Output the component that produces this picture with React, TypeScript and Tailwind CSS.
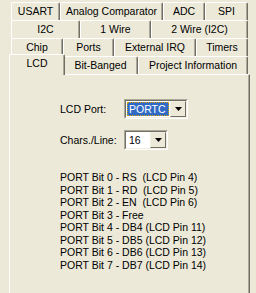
import type { ReactNode } from "react";

const ROWS: { label: string; w: number }[][] = [
  [
    { label: "USART", w: 49 },
    { label: "Analog Comparator", w: 103 },
    { label: "ADC", w: 42 },
    { label: "SPI", w: 43 },
  ],
  [
    { label: "I2C", w: 69 },
    { label: "1 Wire", w: 71 },
    { label: "2 Wire (I2C)", w: 97 },
  ],
  [
    { label: "Chip", w: 52 },
    { label: "Ports", w: 51 },
    { label: "External IRQ", w: 82 },
    { label: "Timers", w: 52 },
  ],
];

const PINS = [
  "PORT Bit 0 - RS  (LCD Pin 4)",
  "PORT Bit 1 - RD  (LCD Pin 5)",
  "PORT Bit 2 - EN  (LCD Pin 6)",
  "PORT Bit 3 - Free",
  "PORT Bit 4 - DB4 (LCD Pin 11)",
  "PORT Bit 5 - DB5 (LCD Pin 12)",
  "PORT Bit 6 - DB6 (LCD Pin 13)",
  "PORT Bit 7 - DB7 (LCD Pin 14)",
];

function Tab({ label, w }: { label: string; w: number }) {
  return (
    <div
      style={{ width: w }}
      className="h-[18px] shrink-0 flex items-center justify-center border-l border-t border-white border-r border-r-[#716f64] shadow-[inset_-1px_0_0_#aca899] rounded-t-[2px]"
    >
      {label}
    </div>
  );
}

function Combo({ width, children }: { width: number; children: ReactNode }) {
  return (
    <div
      style={{ width }}
      className="h-[20px] border border-t-[#aca899] border-l-[#aca899] border-b-white border-r-white"
    >
      <div className="h-full flex bg-white border border-t-[#716f64] border-l-[#716f64] border-b-[#f1efe2] border-r-[#f1efe2]">
        <div className="flex-1 flex p-px">{children}</div>
        <div className="w-[16px] h-full flex items-center justify-center bg-[#ece9d8] border border-t-[#f1efe2] border-l-[#f1efe2] border-b-[#716f64] border-r-[#716f64]">
          <svg width="7" height="4" viewBox="0 0 7 4">
            <path d="M0 0h7L3.5 4z" fill="#000" />
          </svg>
        </div>
      </div>
    </div>
  );
}

export default function App() {
  return (
    <div className="w-[256px] h-[293px] overflow-hidden bg-[#ece9d8] text-black text-[10.5px] leading-none font-['Liberation_Sans',Arial,sans-serif] pt-[2px] flex flex-col">
      {ROWS.map((row, i) => (
        <div key={i} className="flex ml-[11px] w-[237px]">
          {row.map((t) => (
            <Tab key={t.label} label={t.label} w={t.w} />
          ))}
        </div>
      ))}
      <div className="flex ml-[11px] w-[237px] items-end">
        <div className="relative z-10 w-[56px] shrink-0 -mx-[2px] -mt-[2px] -mb-px h-[21px] pb-[3px] flex items-center justify-center bg-[#ece9d8] border-l border-t border-white border-r border-r-[#716f64] shadow-[inset_-1px_0_0_#aca899] rounded-t-[2px]">
          LCD
        </div>
        <Tab label="Bit-Banged" w={75} />
        <Tab label="Project Information" w={110} />
      </div>
      <div className="flex-1 ml-[9px] w-[241px] border-l border-t border-white border-r border-r-[#716f64] shadow-[inset_-1px_0_0_#aca899] pl-[50px] pt-[24px]">
        <div className="flex items-center">
          <span className="w-[64px]">LCD Port:</span>
          <Combo width={64}>
            <span className="flex-1 flex items-center bg-[#316ac5] text-white pl-[2px] outline-1 outline-dotted outline-[#d9a400] -outline-offset-1">
              PORTC
            </span>
          </Combo>
        </div>
        <div className="flex items-center mt-[11px]">
          <span className="w-[64px]">Chars./Line:</span>
          <Combo width={44}>
            <span className="flex items-center pl-[2px]">16</span>
          </Combo>
        </div>
        <div className="mt-[21px] leading-[12.5px]">
          {PINS.map((p) => (
            <div key={p} className="whitespace-pre">
              {p}
            </div>
          ))}
        </div>
      </div>
    </div>
  );
}
